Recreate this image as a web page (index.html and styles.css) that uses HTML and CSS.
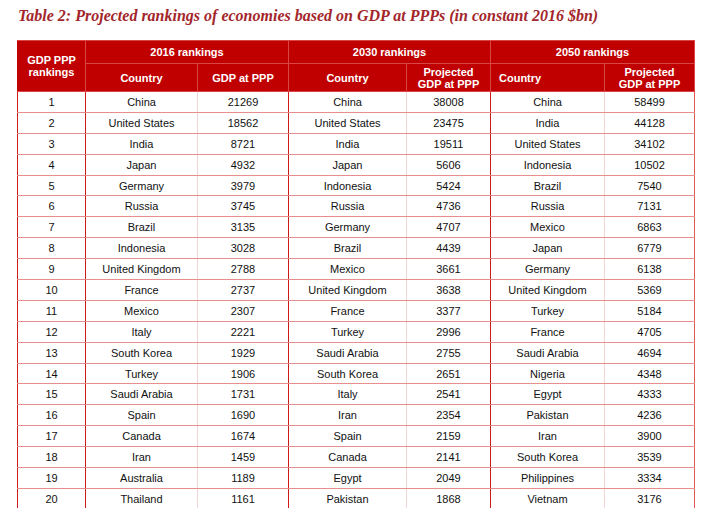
FILE: index.html
```html
<!DOCTYPE html>
<html>
<head>
<meta charset="utf-8">
<link rel="stylesheet" href="styles.css">
</head>
<body>
<div class="page">
  <h1 class="title">Table 2: Projected rankings of economies based on GDP at PPPs (in constant 2016 $bn)</h1>
  <table class="rank-table">
    <colgroup>
      <col class="c-rank"><col class="c-c1"><col class="c-g1"><col class="c-c2"><col class="c-g2"><col class="c-c3"><col class="c-g3">
    </colgroup>
    <thead>
      <tr class="h1">
        <th rowspan="2" class="rank-h">GDP PPP<br>rankings</th>
        <th colspan="2" class="grp">2016 rankings</th>
        <th colspan="2" class="grp">2030 rankings</th>
        <th colspan="2" class="grp">2050 rankings</th>
      </tr>
      <tr class="h2">
        <th>Country</th><th>GDP at PPP</th>
        <th>Country</th><th>Projected<br>GDP at PPP</th>
        <th class="left">Country</th><th>Projected<br>GDP at PPP</th>
      </tr>
    </thead>
    <tbody>
      <tr><td>1</td><td>China</td><td>21269</td><td>China</td><td>38008</td><td>China</td><td>58499</td></tr>
      <tr><td>2</td><td>United States</td><td>18562</td><td>United States</td><td>23475</td><td>India</td><td>44128</td></tr>
      <tr><td>3</td><td>India</td><td>8721</td><td>India</td><td>19511</td><td>United States</td><td>34102</td></tr>
      <tr><td>4</td><td>Japan</td><td>4932</td><td>Japan</td><td>5606</td><td>Indonesia</td><td>10502</td></tr>
      <tr><td>5</td><td>Germany</td><td>3979</td><td>Indonesia</td><td>5424</td><td>Brazil</td><td>7540</td></tr>
      <tr><td>6</td><td>Russia</td><td>3745</td><td>Russia</td><td>4736</td><td>Russia</td><td>7131</td></tr>
      <tr><td>7</td><td>Brazil</td><td>3135</td><td>Germany</td><td>4707</td><td>Mexico</td><td>6863</td></tr>
      <tr><td>8</td><td>Indonesia</td><td>3028</td><td>Brazil</td><td>4439</td><td>Japan</td><td>6779</td></tr>
      <tr><td>9</td><td>United Kingdom</td><td>2788</td><td>Mexico</td><td>3661</td><td>Germany</td><td>6138</td></tr>
      <tr><td>10</td><td>France</td><td>2737</td><td>United Kingdom</td><td>3638</td><td>United Kingdom</td><td>5369</td></tr>
      <tr><td>11</td><td>Mexico</td><td>2307</td><td>France</td><td>3377</td><td>Turkey</td><td>5184</td></tr>
      <tr><td>12</td><td>Italy</td><td>2221</td><td>Turkey</td><td>2996</td><td>France</td><td>4705</td></tr>
      <tr><td>13</td><td>South Korea</td><td>1929</td><td>Saudi Arabia</td><td>2755</td><td>Saudi Arabia</td><td>4694</td></tr>
      <tr><td>14</td><td>Turkey</td><td>1906</td><td>South Korea</td><td>2651</td><td>Nigeria</td><td>4348</td></tr>
      <tr><td>15</td><td>Saudi Arabia</td><td>1731</td><td>Italy</td><td>2541</td><td>Egypt</td><td>4333</td></tr>
      <tr><td>16</td><td>Spain</td><td>1690</td><td>Iran</td><td>2354</td><td>Pakistan</td><td>4236</td></tr>
      <tr><td>17</td><td>Canada</td><td>1674</td><td>Spain</td><td>2159</td><td>Iran</td><td>3900</td></tr>
      <tr><td>18</td><td>Iran</td><td>1459</td><td>Canada</td><td>2141</td><td>South Korea</td><td>3539</td></tr>
      <tr><td>19</td><td>Australia</td><td>1189</td><td>Egypt</td><td>2049</td><td>Philippines</td><td>3334</td></tr>
      <tr><td>20</td><td>Thailand</td><td>1161</td><td>Pakistan</td><td>1868</td><td>Vietnam</td><td>3176</td></tr>
    </tbody>
  </table>
</div>
</body>
</html>
```

FILE: styles.css
```css
html, body {
  margin: 0;
  padding: 0;
  background: #ffffff;
}
.page {
  padding: 7px 0 0 17px;
}
.title {
  margin: 0 0 15px 1px;
  font-family: "Liberation Serif", "DejaVu Serif", serif;
  font-style: italic;
  font-weight: bold;
  font-size: 16px;
  line-height: 18px;
  color: #a3262b;
  letter-spacing: 0;
  white-space: nowrap;
}
.rank-table {
  border-collapse: collapse;
  table-layout: fixed;
  width: 677px;
  font-family: "Liberation Sans", Arial, sans-serif;
  font-size: 11px;
}
.c-rank { width: 68px; }
.c-c1 { width: 112px; }
.c-g1 { width: 91px; }
.c-c2 { width: 118px; }
.c-g2 { width: 84px; }
.c-c3 { width: 114px; }
.c-g3 { width: 90px; }
thead th {
  background: #c00000;
  color: #ffffff;
  font-weight: bold;
  text-align: center;
  border: 1px solid #d94646;
  padding: 0;
  line-height: 12px;
}
thead th.left {
  text-align: left;
  padding-left: 8px;
}
.h1 { height: 23px; }
.h2 { height: 28px; }
.rank-h { border-left: 1px solid #c00000; }
tbody td {
  height: 19.9px;
  padding: 0;
  text-align: center;
  color: #111;
  border-left: 1px solid #d11a1a;
  border-right: 1px solid #d11a1a;
  border-bottom: 1px solid #e88e8e;
}
tbody td:nth-child(2), tbody td:nth-child(4), tbody td:nth-child(6) {
  border-right: 1px solid #f3d5d5;
}
tbody td:nth-child(3), tbody td:nth-child(5), tbody td:nth-child(7) {
  border-left: 1px solid #f3d5d5;
}
tbody td:last-child {
  border-right: 1px solid #e05858;
}
```
